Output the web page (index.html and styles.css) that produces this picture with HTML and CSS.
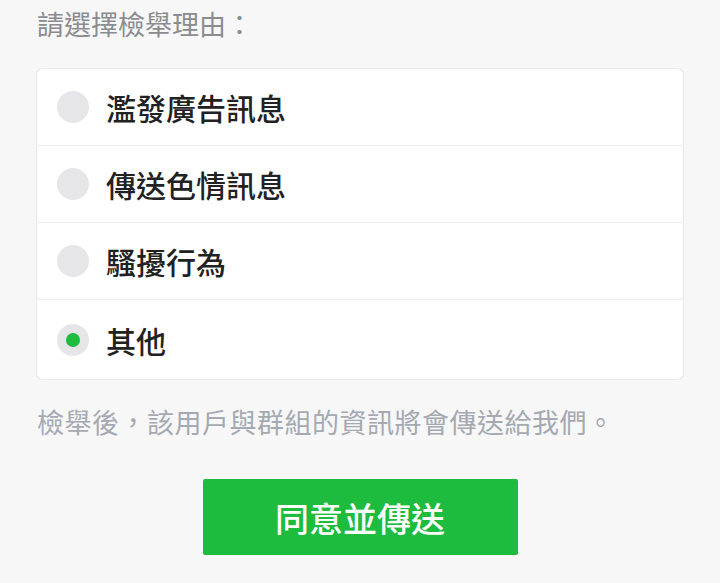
FILE: index.html
```html
<!DOCTYPE html>
<html lang="zh-Hant">
<head>
    <meta charset="UTF-8">
    <meta name="viewport" content="width=device-width, initial-scale=1.0">
    <title>檢舉</title>
    <link rel="stylesheet" href="styles.css">
</head>
<body>
    <div class="report">
        <h2 class="report-title">請選擇檢舉理由：</h2>
        <ul class="reason-list">
            <li class="reason">
                <span class="radio"></span>
                <span class="reason-text">濫發廣告訊息</span>
            </li>
            <li class="reason">
                <span class="radio"></span>
                <span class="reason-text">傳送色情訊息</span>
            </li>
            <li class="reason">
                <span class="radio"></span>
                <span class="reason-text">騷擾行為</span>
            </li>
            <li class="reason">
                <span class="radio checked"></span>
                <span class="reason-text">其他</span>
            </li>
        </ul>
        <p class="report-note">檢舉後，該用戶與群組的資訊將會傳送給我們。</p>
        <div class="actions">
            <button class="submit">同意並傳送</button>
        </div>
    </div>
</body>
</html>
```

FILE: styles.css
```css
body {
    margin: 0;
    background-color: #f7f7f7;
    font-family: 'Noto Sans CJK TC', 'Noto Sans', sans-serif;
}
.report {
    padding: 5px 36px 0;
}
.report-title {
    margin: 0 0 25px 1px;
    font-size: 27px;
    line-height: 38px;
    font-weight: 400;
    color: #8a8c90;
}
.reason-list {
    list-style: none;
    margin: 0;
    padding: 0;
    background: #ffffff;
    border: 1px solid #e9e9e9;
    border-radius: 7px;
}
.reason {
    display: flex;
    align-items: center;
    height: 76px;
    padding-left: 20px;
    border-bottom: 1px solid #ededed;
}
.reason:last-child {
    border-bottom: none;
    height: 79px;
}
.radio {
    display: flex;
    align-items: center;
    justify-content: center;
    width: 32px;
    height: 32px;
    border-radius: 50%;
    background-color: #e6e6e8;
    margin-right: 17px;
    flex-shrink: 0;
}
.radio.checked::after {
    content: "";
    width: 14px;
    height: 14px;
    border-radius: 50%;
    background-color: #1dbb3e;
}
.reason-text {
    font-size: 30px;
    font-weight: 500;
    color: #222222;
}
.report-note {
    margin: 23px 0 0 1px;
    font-size: 27px;
    line-height: 38px;
    letter-spacing: 0.5px;
    color: #a5a9b2;
}
.actions {
    text-align: center;
    margin-top: 38px;
}
.submit {
    width: 315px;
    height: 76px;
    border: none;
    border-radius: 2px;
    background-color: #1dbb3e;
    color: #ffffff;
    font-family: inherit;
    font-size: 34px;
    font-weight: 500;
    cursor: pointer;
}
```
